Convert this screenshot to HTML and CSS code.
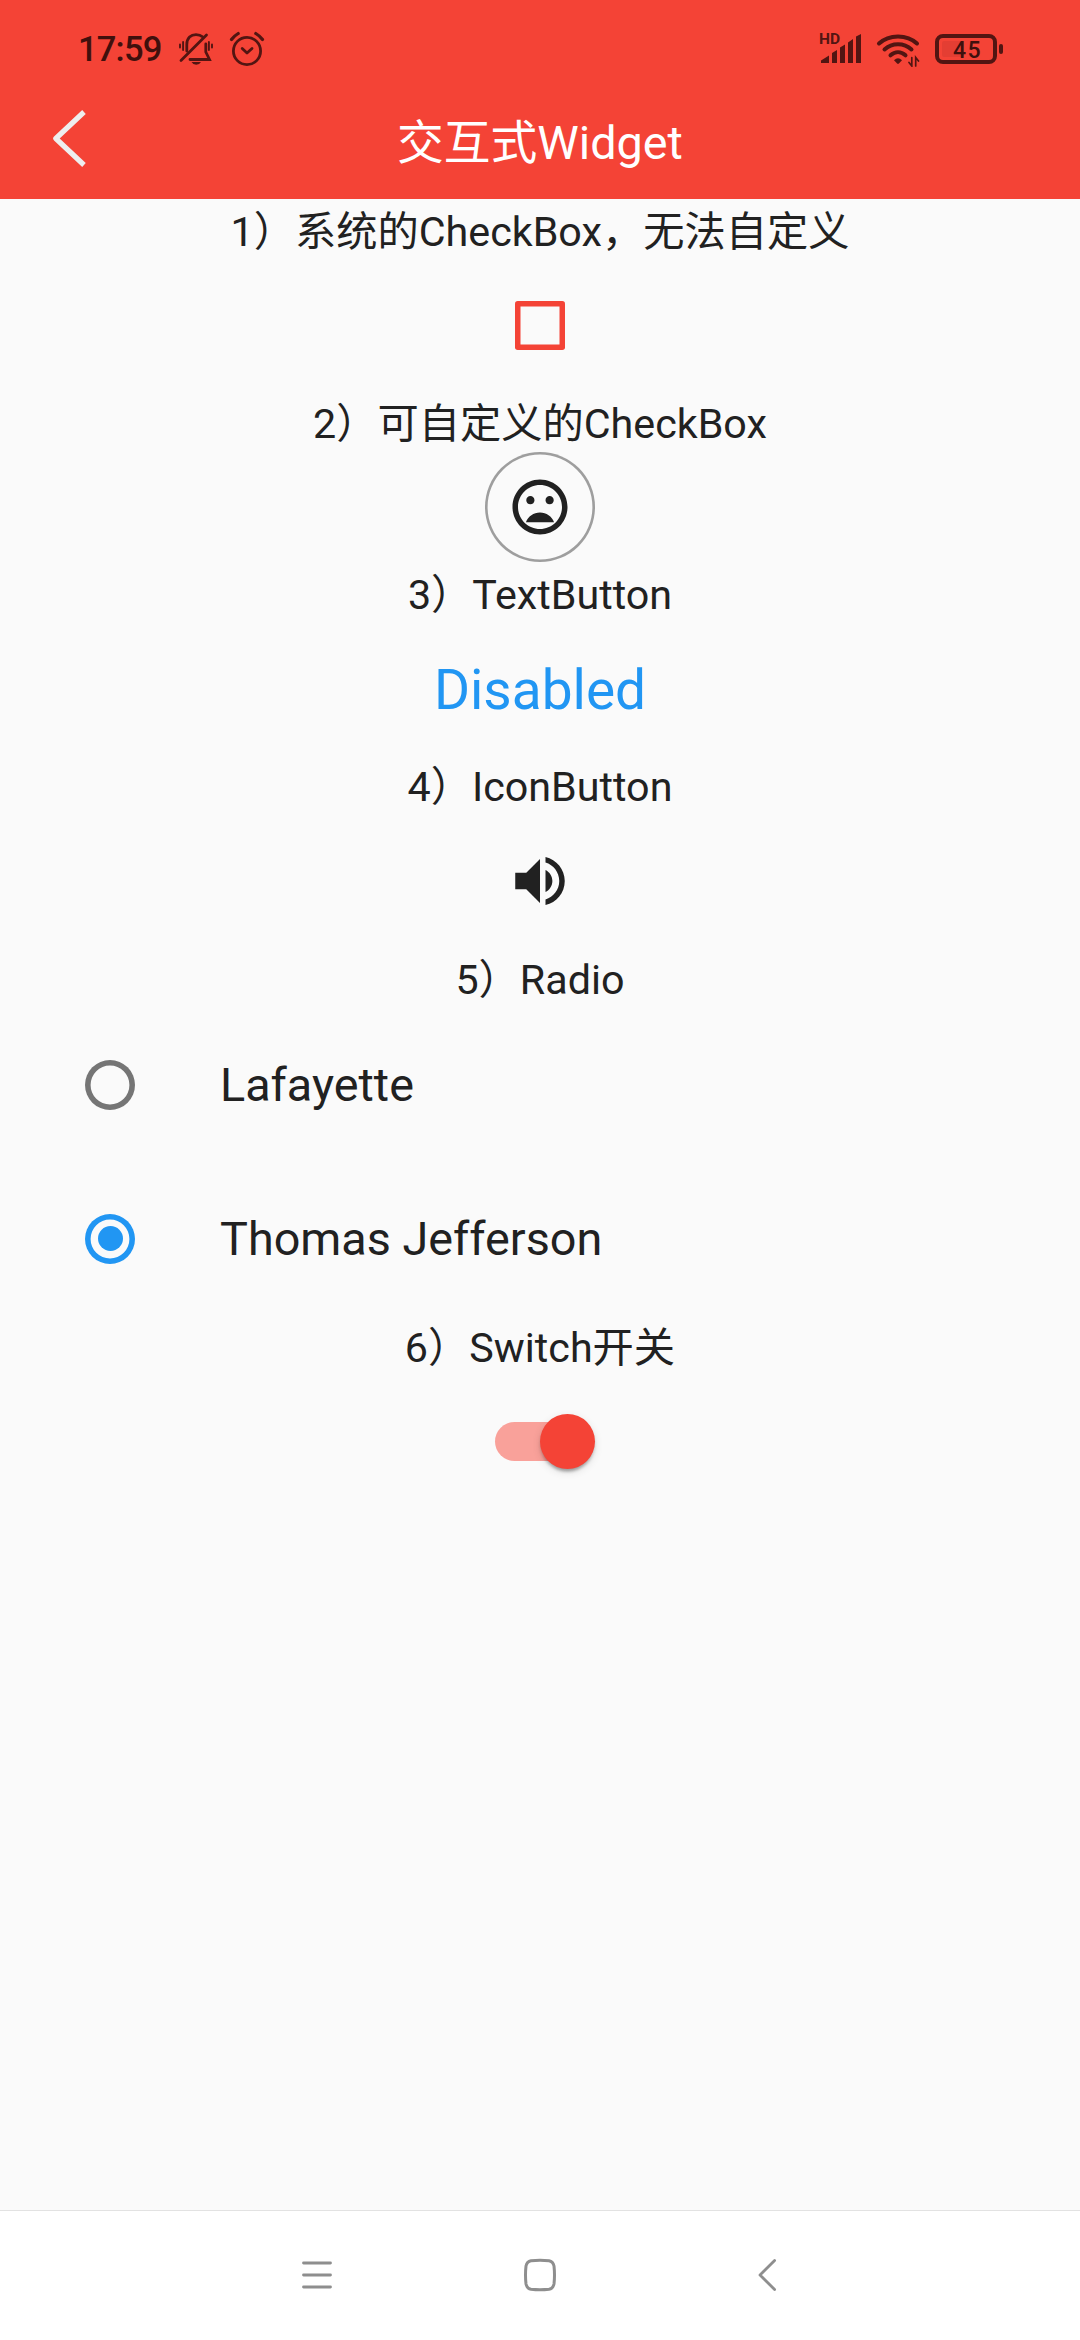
FILE: index.html
```html
<!DOCTYPE html>
<html lang="zh-CN">
<head>
<meta charset="utf-8">
<title>交互式Widget</title>
<link rel="stylesheet" href="styles.css">
</head>
<body>
<div class="screen">
  <header class="app-header">
    <div class="status-bar">
      <span class="clock">17:59</span>
      <svg class="icon-bell" width="36" height="36" viewBox="178 31 36 36" fill="none" stroke="#521512" stroke-width="2.8" stroke-linecap="round">
        <path d="M181 60.500L206.500 35"/>
        <path d="M186.800 51V44.500C186.800 38 191 34.600 196 34.600C198.500 34.600 201 35.400 202.500 36.800"/>
        <path d="M205.800 44V52L209.500 59.500H190"/>
        <path d="M191.500 62H201Q199.500 64.800 196.200 64.800Q193 64.800 191.500 62Z" fill="#521512" stroke="none"/>
        <path d="M180 44.500V47.500M183.100 42V50M208.900 42V50M212 44.500V47.500" stroke-width="1.900"/>
      </svg>
      <svg class="icon-alarm" width="36" height="36" viewBox="229 31 36 36" fill="none" stroke="#521512" stroke-width="2.800" stroke-linecap="round" stroke-linejoin="round">
        <circle cx="247" cy="51" r="13.600"/>
        <path d="M242.200 48.500L247 53L252 48.500"/>
        <path d="M231.500 39.500Q234 36 238.200 33.500M262.500 39.500Q260 36 255.800 33.500" stroke-width="3.200"/>
      </svg>
      <span class="spacer"></span>
      <svg class="icon-signal" width="44" height="36" viewBox="819 31 44 36" fill="#521512">
        <text class="hd-label" x="819" y="43.800">HD</text>
        <path d="M821 63V60.500L829 55.500V63ZM832 63V53L837 50V63ZM840 63V47.500L845 44.500V63ZM848 63V42.500L853 39V63ZM856 63V36.500L861 34V63Z"/>
      </svg>
      <svg class="icon-wifi" width="44" height="36" viewBox="876 31 44 36" fill="none" stroke="#521512" stroke-width="4" stroke-linecap="round">
        <path d="M879 43.500C889 34 907 34 917 43.500M884.500 49.500C892 42.500 904 42.500 911.500 49.500M890.500 55.300C895 51.200 901 51.200 905.500 55.300"/>
        <path d="M894 60.300Q898 56 902 60.300L898.900 63.500Q898 64.300 897.100 63.500Z" fill="#521512" stroke="none"/>
        <path d="M911.800 57.500V66L909 62.500M915.700 66V57.500L918.500 61" stroke-width="1.700"/>
      </svg>
      <svg class="icon-battery" width="70" height="36" viewBox="934 31 70 36">
        <rect x="942" y="41" width="22" height="16" rx="2" fill="#e43e33"/>
        <rect x="937" y="36" width="58" height="26" rx="6" fill="none" stroke="#521512" stroke-width="4"/>
        <rect x="999" y="44" width="4" height="10" rx="2" fill="#521512"/>
        <text class="battery-level" x="967.500" y="58" text-anchor="middle">45</text>
      </svg>
    </div>
    <div class="title-bar">
      <svg class="icon-back" width="36" height="60" viewBox="51 109 36 60" fill="none" stroke="#eeeeee" stroke-width="5.200" stroke-linecap="butt" stroke-linejoin="round">
        <path d="M84 112L55.800 138.500L84 165"/>
      </svg>
      <h1 class="title">交互式Widget</h1>
    </div>
  </header>

  <main class="content">
    <p class="label">1）系统的CheckBox，无法自定义</p>
    <div class="slot"><span class="checkbox"></span></div>
    <p class="label">2）可自定义的CheckBox</p>
    <div class="face-button">
      <svg width="66" height="66" viewBox="0 0 24 24" fill="#212121">
        <path d="M11.990 2C6.470 2 2 6.480 2 12s4.470 10 9.990 10C17.520 22 22 17.520 22 12S17.520 2 11.990 2zM12 20c-4.420 0-8-3.580-8-8s3.580-8 8-8 8 3.580 8 8-3.580 8-8 8zm3.500-9c.83 0 1.500-.67 1.500-1.500S16.330 8 15.500 8 14 8.670 14 9.500s.67 1.500 1.500 1.500zm-7 0c.83 0 1.500-.67 1.500-1.500S9.330 8 8.500 8 7 8.670 7 9.500 7.670 11 8.500 11zm3.500 3c-2.330 0-4.310 1.460-5.110 3.500h10.220c-.8-2.040-2.780-3.500-5.110-3.500z"/>
      </svg>
    </div>
    <p class="label">3）TextButton</p>
    <div class="slot"><span class="text-button">Disabled</span></div>
    <p class="label">4）IconButton</p>
    <div class="slot">
      <svg width="66" height="66" viewBox="0 0 24 24" fill="#212121">
        <path d="M3 9v6h4l5 5V4L7 9H3zm13.500 3c0-1.770-1.020-3.290-2.500-4.030v8.050c1.480-.73 2.500-2.250 2.500-4.020zM14 3.230v2.060c2.890.86 5 3.540 5 6.710s-2.110 5.850-5 6.710v2.060c4.010-.91 7-4.490 7-8.770s-2.990-7.860-7-8.770z"/>
      </svg>
    </div>
    <p class="label">5）Radio</p>
    <div class="radio-row"><span class="radio"></span><span class="radio-title">Lafayette</span></div>
    <div class="radio-row"><span class="radio radio-on"></span><span class="radio-title">Thomas Jefferson</span></div>
    <p class="label">6）Switch开关</p>
    <div class="slot"><span class="switch"><span class="thumb"></span></span></div>
  </main>

  <nav class="nav-bar">
    <svg width="36" height="36" viewBox="0 0 36 36" fill="none" stroke="#8e8e8e" stroke-width="2.800" stroke-linecap="round">
      <path d="M4.500 6H31.500M4.500 18H31.500M4.500 30H31.500"/>
    </svg>
    <svg width="36" height="36" viewBox="0 0 36 36" fill="none" stroke="#8e8e8e" stroke-width="3">
      <path d="M9 3.700Q18 2.700 27 3.700Q31 4.500 32 9Q33 18 32 27Q31 31.500 27 32.300Q18 33.300 9 32.300Q5 31.500 4 27Q3 18 4 9Q5 4.500 9 3.700Z"/>
    </svg>
    <svg width="36" height="36" viewBox="0 0 36 36" fill="none" stroke="#8e8e8e" stroke-width="2.800" stroke-linecap="round" stroke-linejoin="round">
      <path d="M29.600 3.500L15 18L29.600 32.500"/>
    </svg>
  </nav>
</div>
</body>
</html>
```

FILE: styles.css
```css
* {
  box-sizing: border-box;
}

body {
  margin: 0;
  font-family: Roboto, "Noto Sans CJK SC", sans-serif;
  color: #212121;
}

.screen {
  width: 1080px;
  height: 2340px;
  display: flex;
  flex-direction: column;
  background: #fafafa;
  overflow: hidden;
}

.app-header {
  height: 199px;
  flex: none;
  background: #f44336;
}

.status-bar {
  height: 98px;
  display: flex;
  align-items: center;
  padding: 0 76px 0 78px;
}

.status-bar svg {
  flex: none;
}

.clock {
  width: 100px;
  font-size: 34.5px;
  font-weight: 500;
  line-height: 40px;
  letter-spacing: -0.8px;
  color: #40100d;
}

.icon-alarm {
  margin-left: 15px;
}

.spacer {
  flex: 1;
}

.icon-wifi {
  margin-left: 13px;
}

.icon-battery {
  margin-left: 14px;
}

.hd-label {
  font-size: 15.5px;
  font-weight: 700;
}

.battery-level {
  font-size: 23px;
  font-weight: 500;
  letter-spacing: 1.5px;
  fill: #40100d;
}

.title-bar {
  height: 81px;
  display: grid;
  grid-template-columns: 87px 1fr 87px;
  align-items: center;
}

.icon-back {
  margin-left: 51px;
}

.title {
  margin: 8px 0 0;
  text-align: center;
  font-size: 46.75px;
  font-weight: 400;
  line-height: 60px;
  color: #fff;
}

.content {
  flex: 1;
  display: flex;
  flex-direction: column;
}

.label {
  flex: none;
  height: 60.5px;
  margin: 0;
  padding-top: 0.5px;
  text-align: center;
  font-size: 41.25px;
  line-height: 65px;
  white-space: nowrap;
}

.slot {
  flex: none;
  height: 132px;
  display: flex;
  align-items: center;
  justify-content: center;
}

.checkbox {
  width: 49.5px;
  height: 49.5px;
  border-radius: 2.75px;
  box-shadow: inset 0 0 0 5.5px #f44336;
}

.face-button {
  flex: none;
  align-self: center;
  width: 110px;
  height: 110px;
  display: flex;
  align-items: center;
  justify-content: center;
  border-radius: 50%;
  box-shadow: inset 0 0 0 2.6px #9e9e9e;
}

.text-button {
  font-size: 55px;
  line-height: 64px;
  padding-top: 2px;
  color: #2196f3;
}

.radio-row {
  flex: none;
  height: 154px;
  display: flex;
  align-items: center;
  gap: 85px;
  padding-left: 85px;
}

.radio {
  width: 50px;
  height: 50px;
  display: flex;
  align-items: center;
  justify-content: center;
  border-radius: 50%;
  box-shadow: inset 0 0 0 5.6px #757575;
}

.radio-on {
  box-shadow: inset 0 0 0 5.6px #2196f3;
}

.radio-on::before {
  content: "";
  width: 25px;
  height: 25px;
  border-radius: 50%;
  background: #2196f3;
}

.radio-title {
  font-size: 46.75px;
  line-height: 56px;
}

.switch {
  width: 91px;
  height: 39px;
  display: flex;
  align-items: center;
  justify-content: flex-end;
  margin-bottom: 1px;
  border-radius: 20px;
  background: #f9a19a;
}

.thumb {
  flex: none;
  width: 55px;
  height: 55px;
  margin-right: -9px;
  border-radius: 50%;
  background: #f44336;
  box-shadow: 0 5px 3px -3px rgba(0, 0, 0, 0.2), 0 3px 3px rgba(0, 0, 0, 0.14), 0 3px 8px rgba(0, 0, 0, 0.12);
}

.nav-bar {
  flex: none;
  height: 130px;
  display: flex;
  justify-content: space-between;
  align-items: center;
  padding: 0 299px 2px;
  border-top: 1px solid #e2e2e2;
  background: #fff;
}
```
